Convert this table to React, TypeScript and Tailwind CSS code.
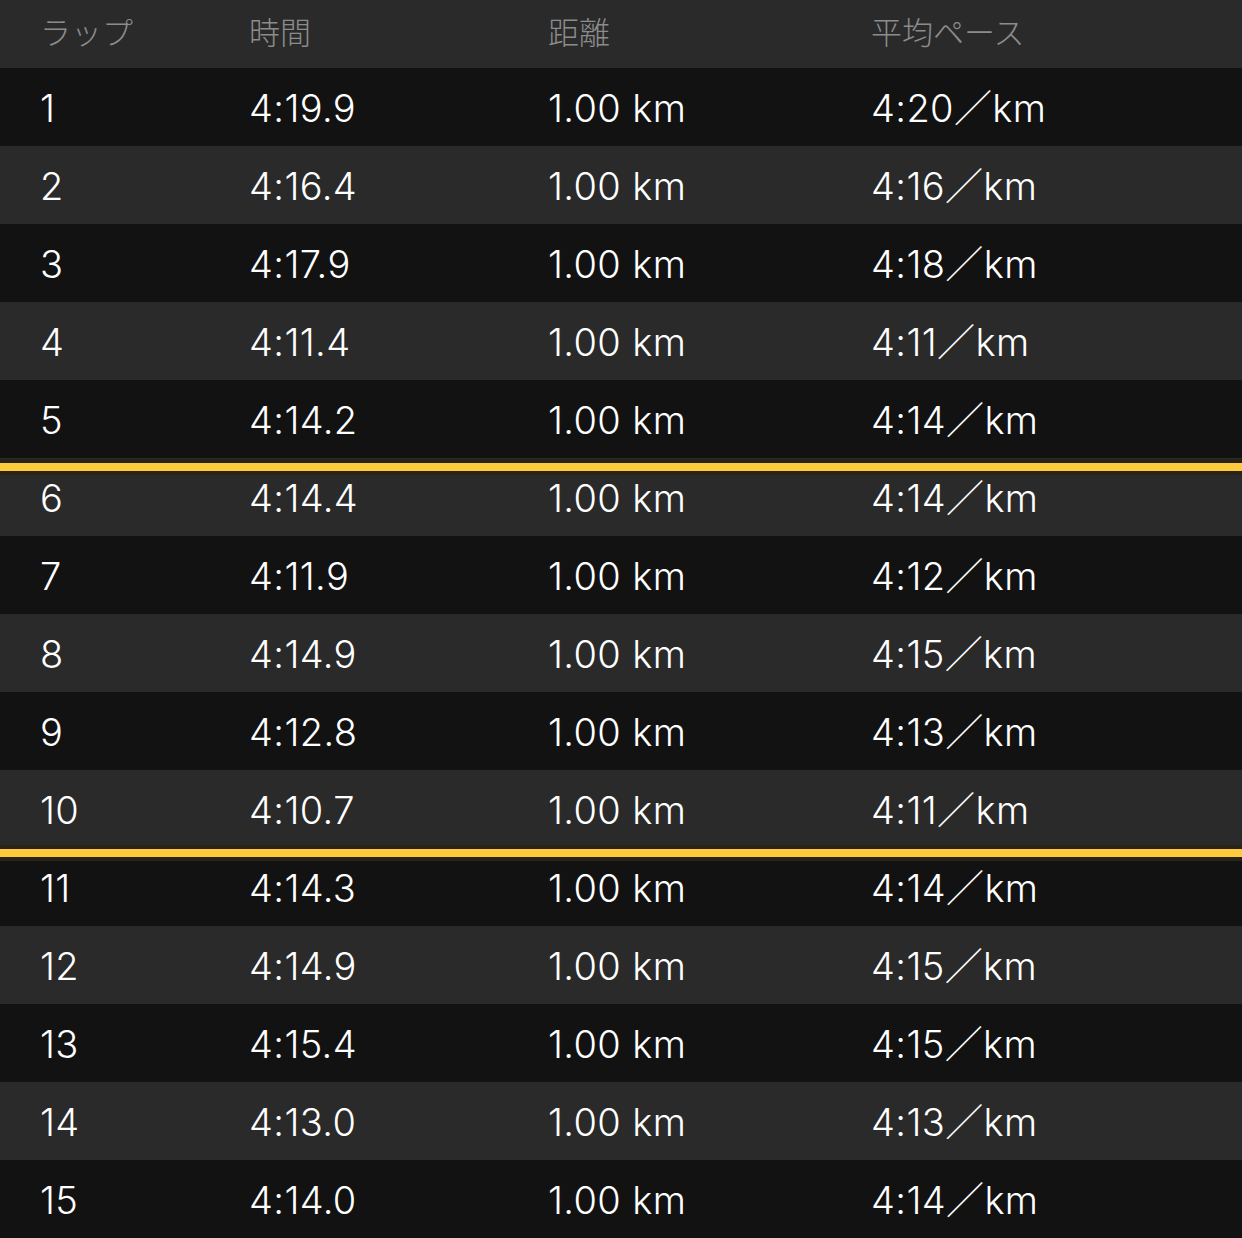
const laps = [
  { lap: "1", time: "4:19.9", pace: "4:20" },
  { lap: "2", time: "4:16.4", pace: "4:16" },
  { lap: "3", time: "4:17.9", pace: "4:18" },
  { lap: "4", time: "4:11.4", pace: "4:11" },
  { lap: "5", time: "4:14.2", pace: "4:14" },
  { lap: "6", time: "4:14.4", pace: "4:14" },
  { lap: "7", time: "4:11.9", pace: "4:12" },
  { lap: "8", time: "4:14.9", pace: "4:15" },
  { lap: "9", time: "4:12.8", pace: "4:13" },
  { lap: "10", time: "4:10.7", pace: "4:11" },
  { lap: "11", time: "4:14.3", pace: "4:14" },
  { lap: "12", time: "4:14.9", pace: "4:15" },
  { lap: "13", time: "4:15.4", pace: "4:15" },
  { lap: "14", time: "4:13.0", pace: "4:13" },
  { lap: "15", time: "4:14.0", pace: "4:14" },
];

const font = { fontFamily: 'Inter, "Noto Sans CJK JP", sans-serif' };

const App = () => {
  return (
    <div className="w-[1242px] h-[1238px] overflow-hidden bg-[#121212]" style={font}>
      {/* Header */}
      <div className="flex items-center h-[68px] pb-[2px] bg-[#2a2a2a] text-[31px] font-light text-[#8c8c8c]">
        <div className="w-[249px] pl-[40px]">ラップ</div>
        <div className="w-[299px]">時間</div>
        <div className="w-[323px]">距離</div>
        <div>平均ペース</div>
      </div>
      {/* Laps */}
      {laps.map((l, i) => (
        <div
          key={l.lap}
          className={`relative flex items-center h-[78px] pt-[2px] text-[38px] font-[350] tracking-[0.01em] text-white ${
            i % 2 === 0 ? "bg-[#121212]" : "bg-[#2a2a2a]"
          }`}
        >
          {l.lap === "6" && (
            <div className="absolute left-0 right-0 top-[1px] h-[16px] bg-[#2a2418] flex items-center">
              <div className="w-full h-[8px] bg-[#fdcb3d]" />
            </div>
          )}
          {l.lap === "11" && (
            <div className="absolute left-0 right-0 top-[-3px] h-[16px] bg-[#2a2418] flex items-center">
              <div className="w-full h-[8px] bg-[#fdcb3d]" />
            </div>
          )}
          <div className="w-[249px] pl-[40px]">{l.lap}</div>
          <div className="w-[299px]">{l.time}</div>
          <div className="w-[323px]">1.00 km</div>
          <div>{l.pace}／km</div>
        </div>
      ))}
    </div>
  );
};

export default App;
